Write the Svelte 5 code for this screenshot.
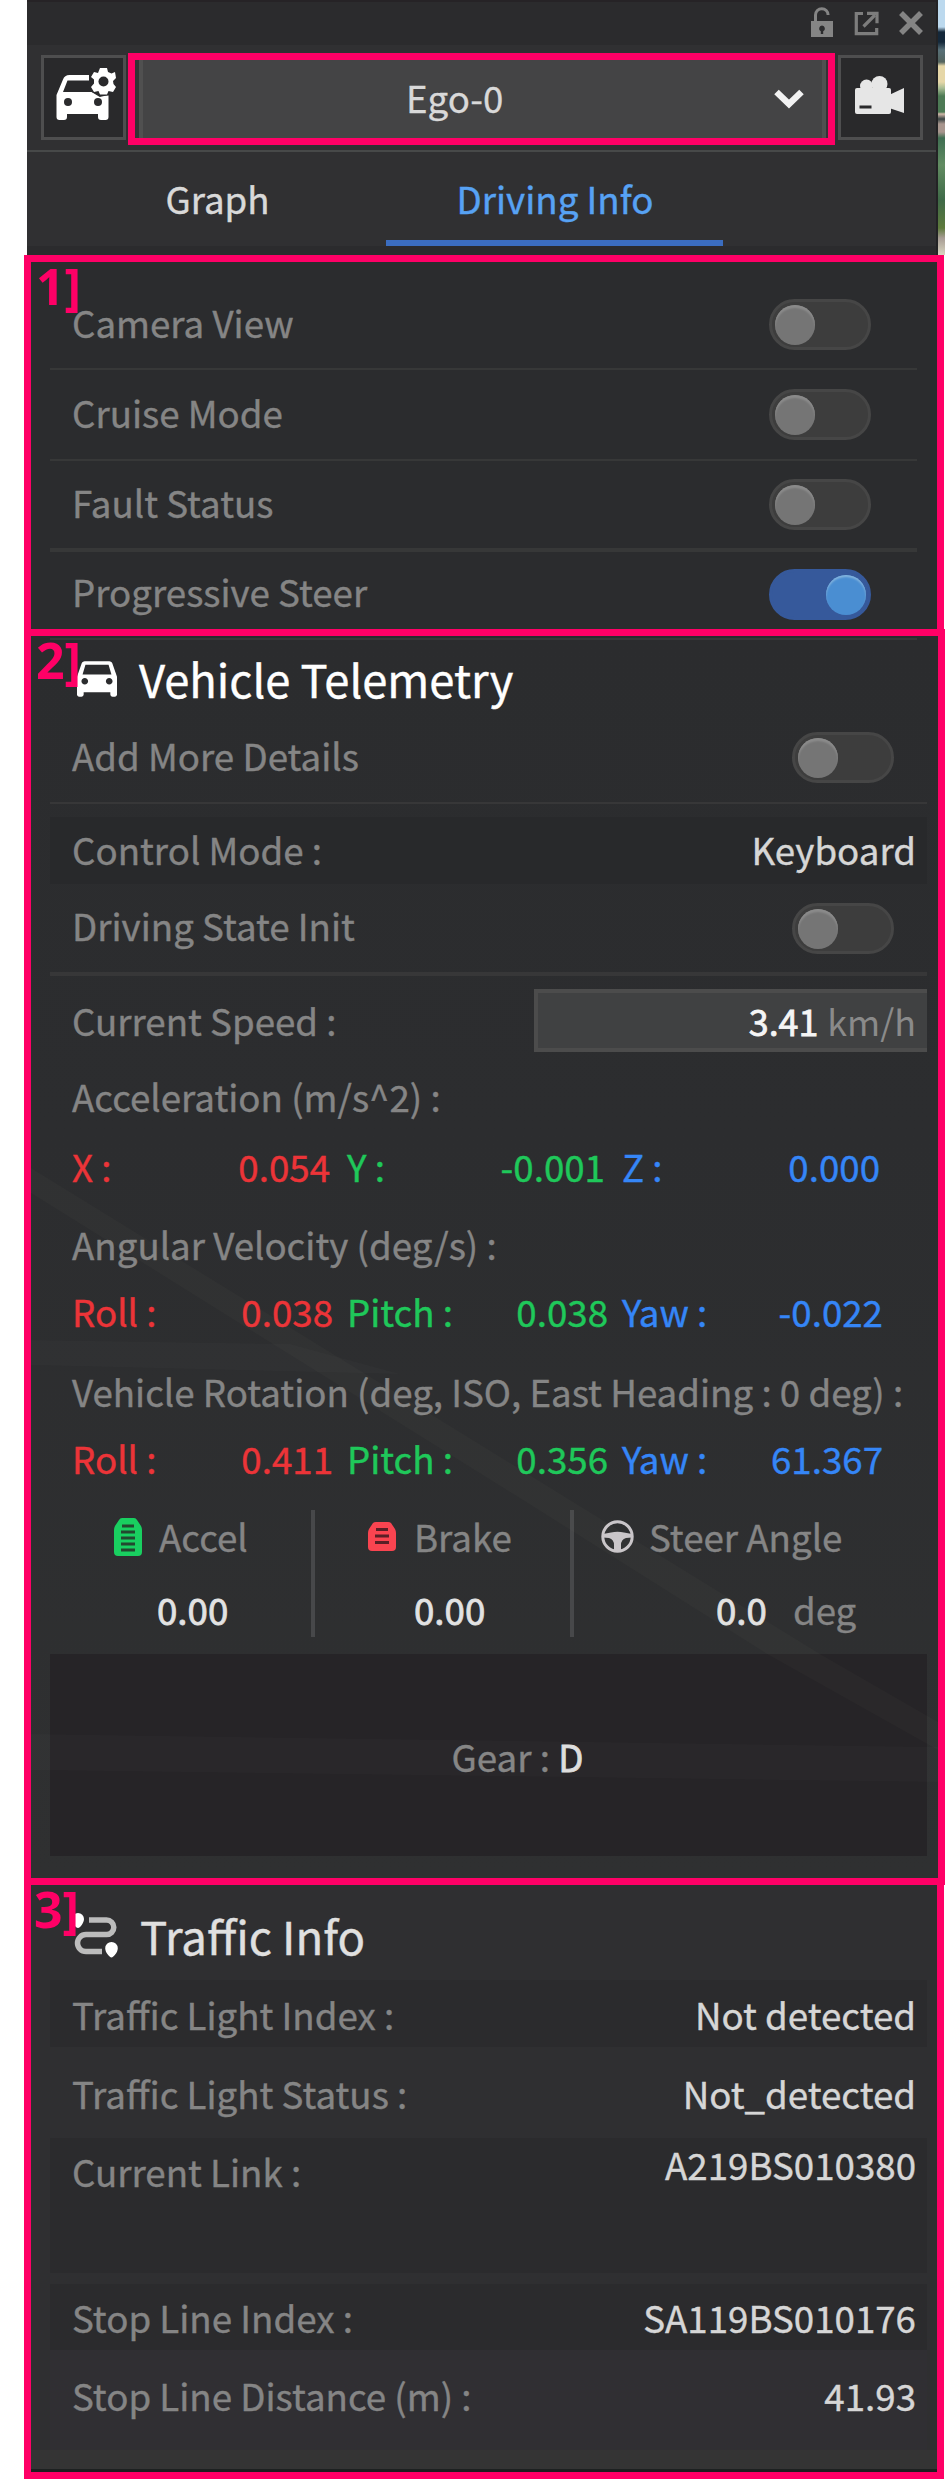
<script>
  const switches = [
    { label: 'Camera View', on: false },
    { label: 'Cruise Mode', on: false },
    { label: 'Fault Status', on: false },
    { label: 'Progressive Steer', on: true }
  ];

  const vectors = [
    {
      title: 'Acceleration (m/s^2) :',
      kind: 'acc',
      axes: [['X :', '0.054'], ['Y :', '-0.001'], ['Z :', '0.000']]
    },
    {
      title: 'Angular Velocity (deg/s) :',
      kind: 'ang',
      axes: [['Roll :', '0.038'], ['Pitch :', '0.038'], ['Yaw :', '-0.022']]
    },
    {
      title: 'Vehicle Rotation (deg, ISO, East Heading : 0 deg) :',
      kind: 'rot',
      axes: [['Roll :', '0.411'], ['Pitch :', '0.356'], ['Yaw :', '61.367']]
    }
  ];

  const traffic = [
    { label: 'Traffic Light Index :', value: 'Not detected', kind: 'r1 shade' },
    { label: 'Traffic Light Status :', value: 'Not_detected', kind: 'r2' },
    { label: 'Current Link :', value: 'A219BS010380', kind: 'r3 shade' },
    { label: 'Stop Line Index :', value: 'SA119BS010176', kind: 'r4 shade' },
    { label: 'Stop Line Distance (m) :', value: '41.93', kind: 'r5' }
  ];
</script>

{#snippet toggle(on)}
  <span class="toggle" class:on><i></i></span>
{/snippet}

<div class="page">
  <div class="panel">
    <header>
      <div class="titlebar">
        <svg width="24" height="31" viewBox="0 0 24 31" fill="none">
          <path d="M5.500 15V8a6.300 6.300 0 0 1 12.600 0" stroke="#858585" stroke-width="3" />
          <path fill="#858585" fill-rule="evenodd" d="M1 14h22v16H1zM12 18.500a3 3 0 0 0-1.200 5.700V27h2.400v-2.800A3 3 0 0 0 12 18.500z" />
        </svg>
        <svg width="25" height="25" viewBox="0 0 25 25" fill="none" stroke="#7d7d7d" stroke-width="3.200">
          <path d="M9 2.500H2.300v20.200h20.400V17" />
          <path d="M9.500 15.500 21 4" />
          <path d="M13 2.300h10v10" />
        </svg>
        <svg width="24" height="24" viewBox="0 0 24 24" fill="none" stroke="#848484" stroke-width="5.500">
          <path d="M2 2 22 22M22 2 2 22" />
        </svg>
      </div>
      <div class="toolbar">
        <button class="square" aria-label="Vehicle settings">
          <svg width="60" height="52" viewBox="0 0 60 52">
            <path fill="#fff" d="M33 7H13.500Q8.500 7 7 11.500L.500 27V49q0 3 3 3h4.500q3 0 3-3v-3h31v3q0 3 3 3h4.500q3 0 3-3V27.500l-8 .500-8.500-4H7l4.500-11.500H33z" />
            <circle cx="12" cy="34" r="4" fill="#2b2b2d" /><circle cx="42" cy="34" r="4" fill="#2b2b2d" />
            <path d="M34 22 44 28 52 26" stroke="#2b2b2d" stroke-width="2" fill="none" />
            <path fill="#fff" d="M44 0h7l1 4 3.500 1.500L59 4l1 6-3 3 .500 3L60 19l-3 5-4.500-1-1.500 3.500h-7L42.500 23 38 24l-3-5 3-3.500v-4L35 9l3-5 4 1z" />
            <circle cx="47.500" cy="13.500" r="5" fill="#29292b" />
          </svg>
        </button>
        <div class="picked">
          <div class="select">
            <span>Ego-0</span>
            <svg width="30" height="20" viewBox="0 0 30 20" fill="none" stroke="#f2f2f2" stroke-width="6.500"><path d="M2.500 3 15 15 27.500 3" /></svg>
          </div>
        </div>
        <button class="square" aria-label="Camera">
          <svg width="49" height="38" viewBox="0 0 49 38" fill="#e6e6e6">
            <circle cx="11.500" cy="10" r="6.500" /><circle cx="24.500" cy="8" r="8" />
            <rect y="12" width="36" height="26" rx="2" />
            <path d="M34 19 49 12V37L34 32z" />
            <rect x="4.500" y="29.500" width="12" height="3" fill="#29292b" />
          </svg>
        </button>
      </div>
      <nav>
        <span class="tab first">Graph</span>
        <span class="tab active">Driving Info</span>
      </nav>
    </header>
    <div class="scene"></div>
  </div>

  <section class="box one">
    <b class="tag">1]</b>
    {#each switches as s}
      <div class="row switch">
        <span class="t">{s.label}</span>
        {@render toggle(s.on)}
      </div>
    {/each}
  </section>

  <section class="box two">
    <svg class="streaks" width="907" height="1242" viewBox="31 636 907 1242">
      <path fill="#fff0d8" fill-opacity=".02" d="M31 1168 570 1500 820 1654 938 1722V1750L767 1654 523 1500 31 1193z" />
      <path fill="#fff" fill-opacity=".014" d="M31 1340 290 1344 400 1374 31 1365zM31 1734 938 1747V1782L31 1770z" />
    </svg>
    <b class="tag">2]</b>
    <div class="heading">
      <svg width="40" height="36" viewBox="3 5 18 16" fill="#fff">
        <path d="M18.920 6.010C18.720 5.420 18.160 5 17.500 5h-11c-.660 0-1.210.420-1.420 1.010L3 12v8c0 .550.450 1 1 1h1c.550 0 1-.450 1-1v-1h12v1c0 .550.450 1 1 1h1c.550 0 1-.450 1-1v-8l-2.080-5.990zM6.500 15.500c-.830 0-1.500-.670-1.500-1.500s.670-1.500 1.500-1.500 1.500.670 1.500 1.500-.670 1.500-1.500 1.500zm11 0c-.830 0-1.500-.670-1.500-1.500s.670-1.500 1.500-1.500 1.500.670 1.500 1.500-.670 1.500-1.500 1.500zM5.500 11l1.300-4.400h10.400L18.500 11z" />
      </svg>
      <span class="t">Vehicle Telemetry</span>
    </div>
    <div class="row more"><span class="t">Add More Details</span>{@render toggle(false)}</div>
    <div class="row mode shade"><span class="t">Control Mode :</span><span class="t v">Keyboard</span></div>
    <div class="row init"><span class="t">Driving State Init</span>{@render toggle(false)}</div>
    <div class="row speed">
      <span class="t">Current Speed :</span>
      <div class="field"><span class="num">3.41</span><span class="unit">km/h</span></div>
    </div>
    {#each vectors as g}
      <div class="vec {g.kind}">
        <div class="line t">{g.title}</div>
        <div class="line axes">
          {#each g.axes as [name, value]}
            <div class="axis"><span class="t">{name}</span><span class="t">{value}</span></div>
          {/each}
        </div>
      </div>
    {/each}
    <div class="pedals">
      <div class="col accel">
        <div class="line">
          <svg width="28" height="38" viewBox="0 0 28 38">
            <path fill="#19cf60" d="M8 0h12q2 0 3 2l4 6q1 2 1 4v22q0 4-4 4H4q-4 0-4-4V12q0-2 1-4l4-6q1-2 3-2z" />
            <path stroke="#23482f" stroke-width="2.800" d="M8 8h12M7 14h14M7 20h14M7 26h14M7 32h14" />
          </svg>
          <span class="t">Accel</span>
        </div>
        <div class="line val"><span class="t">0.00</span></div>
      </div>
      <div class="col brake">
        <div class="line">
          <svg width="28" height="29" viewBox="0 0 28 29">
            <path fill="#f94450" d="M8 0h12q2 0 3 1l4 6q1 2 1 4v14q0 4-4 4H4q-4 0-4-4V11q0-2 1-4l4-6q1-1 3-1z" />
            <path stroke="#5a1f26" stroke-width="2.800" d="M8 7.500h12M7 14h14M7 20.500h14" />
          </svg>
          <span class="t">Brake</span>
        </div>
        <div class="line val"><span class="t">0.00</span></div>
      </div>
      <div class="col steer">
        <div class="line">
          <svg width="33" height="33" viewBox="0 0 33 33">
            <circle cx="16.500" cy="16.500" r="14.700" fill="none" stroke="#c9c5c9" stroke-width="3" />
            <path fill="#c9c5c9" d="M2 14 10 12.500Q16.500 11 23 12.500L31 14V17.500L25 18Q20 19.500 20 25V31H13V25Q13 19.500 8 18L2 17.500z" />
          </svg>
          <span class="t">Steer Angle</span>
        </div>
        <div class="line val"><span class="t">0.0</span><span class="t deg">deg</span></div>
      </div>
    </div>
    <div class="gear"><span class="t">Gear : <em>D</em></span></div>
  </section>

  <section class="box three">
    <b class="tag">3]</b>
    <div class="heading">
      <svg width="48" height="46" viewBox="0 0 48 46" fill="none">
        <path d="M19 8H36.500a7.300 7.300 0 0 1 0 14.600H16a8.300 8.300 0 0 0 0 17H32" stroke="#bcbcbc" stroke-width="5.500" />
        <path fill="#fff" d="M8 1a6 6 0 0 1 6 6c0 4-4 9-6 9s-6-5-6-9a6 6 0 0 1 6-6zM41.500 30a6.300 6.300 0 0 1 6.300 6.300c0 4-4.300 9.200-6.300 9.200s-6.300-5.200-6.300-9.200a6.300 6.300 0 0 1 6.300-6.300z" />
      </svg>
      <span class="t">Traffic Info</span>
    </div>
    {#each traffic as r}
      <div class="row {r.kind}"><span class="t">{r.label}</span><span class="t v">{r.value}</span></div>
    {/each}
    <div class="foot"></div>
  </section>
</div>

<style>
  :global(body) { background: #fff; }
  .page {
    width: 945px;
    height: 2479px;
    overflow: hidden;
    font-family: "Noto Sans CJK KR", "Noto Sans", sans-serif;
    font-size: 36.700px;
    line-height: 48px;
    color: #858585;
    white-space: nowrap;
  }
  .page * { box-sizing: border-box; }
  svg { display: block; flex: none; }
  .t { padding-bottom: 6px; -webkit-text-stroke: .4px currentColor; }

  /* Window header */
  .panel { display: flex; height: 255px; padding-left: 27px; }
  header { width: 911px; background: #2f2f31; border-right: 2px solid #232325; }
  .scene {
    width: 7px;
    background: linear-gradient(#bcd9ee 0 27px, #14283a 32px 42px, #587078 50px, #54645e 62px, #e6d7a8 66px 82px, #a9bd94 88px, #4d7a55 96px 112px, #d0b8a8 114px, #3a4444 119px, #a8968e 124px 132px, #3f6e52 138px, #628c62 165px, #3f6a48 200px, #5e7a3c 228px, #a79c94 238px, #d8d6c0 255px);
  }
  .titlebar {
    display: flex;
    align-items: center;
    justify-content: flex-end;
    gap: 20px;
    height: 45px;
    padding-right: 13px;
    border-top: 2px solid #262326;
    background: #2b2b2d;
  }
  .titlebar svg:first-child { margin-top: -3px; }
  .titlebar svg { margin-top: -1px; }
  .toolbar {
    display: flex;
    align-items: flex-start;
    height: 107px;
    padding: 8px 0 0 14px;
    background: #303032;
    border-bottom: 2px solid #474949;
  }
  .square {
    display: flex;
    align-items: center;
    justify-content: center;
    width: 85px;
    height: 85px;
    margin-top: 2px;
    padding: 0 3px 5px 0;
    border: 3px solid #4e4e4f;
    background: #29292b;
  }
  .square:first-child { padding: 0 0 7px 4px; }
  .picked {
    width: 707px;
    height: 92px;
    margin: 0 3px 0 2px;
    padding: 0 2px 0 4px;
    border: 7px solid #ff0066;
    background: #343436;
  }
  .select {
    display: flex;
    align-items: center;
    justify-content: space-between;
    height: 78px;
    padding: 0 18px 0 263px;
    border: solid #505050;
    border-width: 0 4px;
    background: #444445;
    color: #d9d9d9;
  }
  .select span { padding-bottom: 4px; -webkit-text-stroke: .3px currentColor; }
  nav { display: flex; height: 103px; border-bottom: 9px solid #2b2b2d; background: #303032; }
  .tab { width: 337px; height: 94px; padding: 22px 0 0 1px; text-align: center; color: #d9d9d9; border-bottom: 6px solid transparent; -webkit-text-stroke: .4px currentColor; }
  .first { width: 359px; padding-left: 22px; }
  .active { color: #57a2f4; border-color: #3b6dc0; }

  /* Outlined sections */
  .box {
    position: relative;
    width: 920px;
    margin-left: 24px;
    padding: 0 10px 0 19px;
    border: 7px solid #ff0066;
    background: #2b2c2e;
  }
  .tag {
    position: absolute;
    z-index: 1;
    top: -3px;
    left: 5px;
    font: 700 50px/54px "Noto Sans", sans-serif;
    color: #ff0066;
  }
  .row { display: flex; justify-content: space-between; align-items: center; padding: 0 11px 0 22px; position: relative; }
  .v { color: #d6d6d6; }
  .shade { background: #28292b; }

  .toggle { width: 102px; height: 51px; padding: 3px; border: 3px solid #464646; border-radius: 26px; background: #3d3d3d; }
  .toggle i { display: block; width: 40px; height: 40px; border-radius: 50%; background: #757575; box-shadow: inset 0 3px 2px #8b8b8b; }
  .toggle.on { border-color: #36599b; background: #36599b; }
  .toggle.on i { margin-left: 51px; background: #4a8ed2; box-shadow: inset 0 2px 2px #83b3dd; }

  .one { height: 381px; padding-top: 19px; }
  .switch { width: 867px; height: 91px; padding-right: 46px; border-bottom: 2px solid #373838; }
  .switch:nth-of-type(1) { height: 89px; }
  .switch:nth-of-type(3) { border-bottom-width: 4px; }
  .switch:nth-of-type(4) { height: 77px; padding-top: 7px; border: 0; }

  .two { width: 921px; height: 1256px; margin-top: -7px; padding-right: 11px; padding-top: 2px; background: linear-gradient(#2b2c2e, #2c2d2f 40%, #2f3031); }
  .streaks { position: absolute; top: 0; left: 0; z-index: 1; }
  .heading { display: flex; align-items: center; color: #fff; }
  .two .heading { width: 867px; height: 75px; padding: 8px 0 0 27px; border-top: 2px solid #373838; font-size: 45.300px; gap: 22px; }
  .two .heading svg { margin-bottom: 4px; }
  .more { height: 91px; padding-right: 33px; border-bottom: 2px solid #373738; }
  .mode { height: 67px; margin-top: 13px; padding-top: 2px; }
  .init { height: 92px; padding-right: 33px; border-bottom: 4px solid #373738; }
  .speed { height: 63px; margin-top: 13px; padding-right: 0; }
  .speed .t { padding-bottom: 2px; }
  .field {
    display: flex;
    align-items: center;
    justify-content: flex-end;
    gap: 9px;
    width: 393px;
    height: 63px;
    padding: 0 11px 2px 0;
    border: 4px solid #4c4c4c;
    border-right: 0;
    background: #404142;
    font-size: 35.800px;
  }
  .num { color: #f5f5f5; -webkit-text-stroke: .8px currentColor; }
  .unit { color: #8a8a8a; }

  .line { height: 48px; }
  .vec { padding-left: 22px; }
  .acc { padding-top: 20px; }
  .ang { padding-top: 27px; }
  .rot { padding-top: 29px; }
  .acc .axes { margin-top: 22px; }
  .ang .axes, .rot .axes { margin-top: 19px; }
  .vec > .t { line-height: 48px; }
  .axes { display: flex; gap: 14px; margin-bottom: 3px; }
  .acc .axes { gap: 17px; }
  .acc .axis { width: 258px; }
  .axis { display: flex; justify-content: space-between; width: 261px; color: #ec3438; }
  .axis:nth-child(2) { color: #1fc85a; }
  .axis:nth-child(3) { color: #3586f7; }

  .pedals { display: flex; height: 127px; margin-top: 28px; }
  .col { padding-top: 5px; }
  .col + .col { border-left: 4px solid #47484a; }
  .col .line { display: flex; align-items: center; }
  .col svg { margin-bottom: 5px; }
  .col .val { margin-top: 25px; color: #e2e2e2; }
  .col .val .t { -webkit-text-stroke-width: .8px; }
  .accel { width: 261px; padding-left: 64px; }
  .accel .line { gap: 17px; }
  .accel .val { padding-left: 43px; }
  .brake { width: 259px; padding-left: 53px; }
  .brake .line { gap: 18px; }
  .brake .val { padding-left: 46px; }
  .steer { width: 357px; padding-left: 27px; }
  .steer .line { gap: 15px; }
  .steer .val { padding-left: 115px; gap: 26px; }
  .col .val .deg { color: #858585; -webkit-text-stroke-width: .3px; }
  .gear { display: flex; align-items: center; justify-content: center; height: 202px; margin-top: 17px; padding: 7px 0 0 58px; background: #262427; }
  .gear em { font-style: normal; color: #dedede; -webkit-text-stroke: .8px currentColor; }

  .three { height: 601px; margin-top: -7px; background: #2f2f31; }
  .three .tag { left: 3px; top: -3px; }
  .three .heading { height: 95px; padding: 10px 0 0 20px; font-size: 45.500px; gap: 22px; color: #e0e0e0; }
  .three .heading svg { margin-bottom: 6px; }
  .three .shade { background: #2b2b2d; }
  .r1 { height: 67px; padding-top: 7px; }
  .r2 { height: 91px; padding-top: 6px; }
  .r3 { height: 135px; align-items: flex-start; padding-top: 9px; margin-bottom: 11px; }
  .r3 .v { margin-top: -7px; }
  .r4 { height: 66px; padding-top: 6px; }
  .r5 { height: 100px; padding-bottom: 4px; background: #302f33; }
  .foot { height: 22px; margin: 0 -10px 0 -19px; background: #343434; border-bottom: 3px solid #1c2020; }
</style>
